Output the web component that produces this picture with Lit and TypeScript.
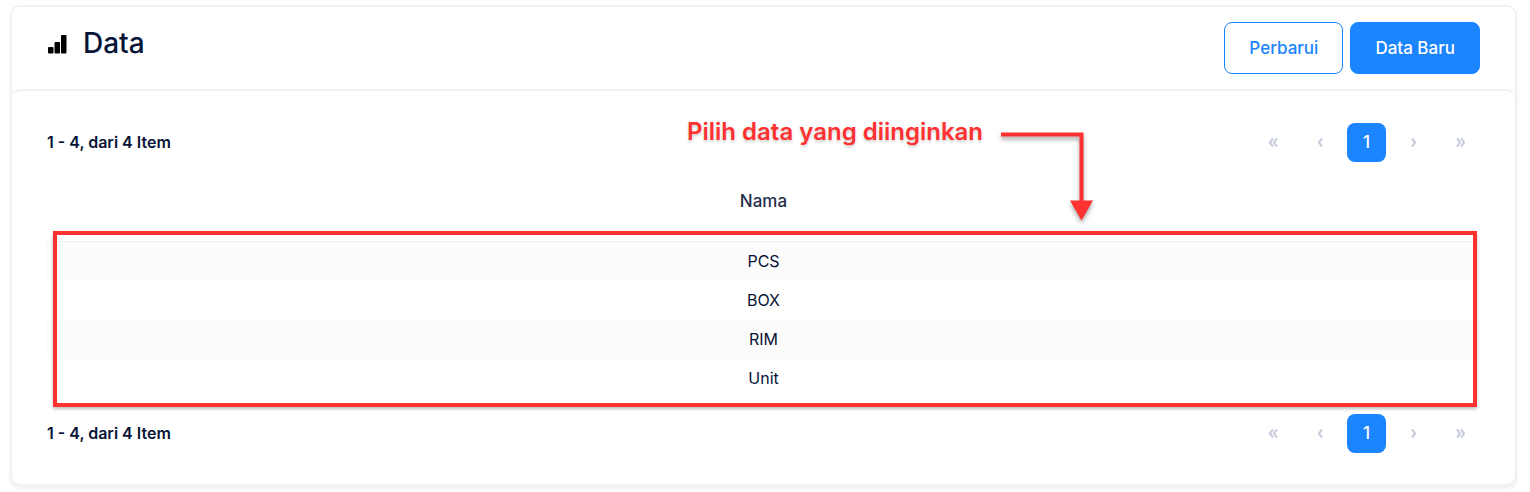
import { LitElement, html, css } from "lit";
import { customElement, property } from "lit/decorators.js";

@customElement("page-nav")
class PageNav extends LitElement {
  @property() summary = "";

  static styles = css`
    :host {
      display: flex;
      align-items: center;
      justify-content: space-between;
    }
    .summary {
      margin: 0;
      padding-bottom: 1px;
      font-size: 16px;
      line-height: 20px;
      font-weight: 600;
    }
    .pages {
      display: flex;
      gap: 8px;
    }
    button {
      display: flex;
      align-items: center;
      justify-content: center;
      width: 39px;
      height: 39px;
      padding: 0 0 2px;
      border: 0;
      border-radius: 8px;
      background: transparent;
      color: #c3c9da;
      font: 500 17px/24px Inter, sans-serif;
    }
    .current {
      background: #1b84ff;
      color: #fff;
    }
    svg {
      width: 10px;
      height: 10px;
      fill: none;
      stroke: currentColor;
      stroke-width: 2;
    }
  `;

  private icon(d: string) {
    return html`<svg viewBox="0 0 10 10" aria-hidden="true"><path d=${d}></path></svg>`;
  }

  render() {
    return html`
      <p class="summary">${this.summary}</p>
      <nav class="pages" aria-label="Halaman">
        <button aria-label="Pertama">${this.icon("M5 1.4 2 5.5 5 9.6M9 1.4 6 5.5 9 9.6")}</button>
        <button aria-label="Sebelumnya">${this.icon("M7 1.4 4 5.5 7 9.6")}</button>
        <button class="current" aria-current="page">1</button>
        <button aria-label="Berikutnya">${this.icon("M3 1.4 6 5.5 3 9.6")}</button>
        <button aria-label="Terakhir">${this.icon("M1 1.4 4 5.5 1 9.6M5 1.4 8 5.5 5 9.6")}</button>
      </nav>
    `;
  }
}

@customElement("app-root")
class AppRoot extends LitElement {
  static styles = css`
    :host {
      display: block;
      padding: 5px 13px 6px 10px;
      font-family: Inter, sans-serif;
      color: #071437;
      background: #fff;
    }
    * {
      box-sizing: border-box;
    }
    .card {
      border: 2px solid #f1f1f2;
      border-radius: 10px;
      background: #fafafa;
      box-shadow: 0 3px 4px rgba(0, 0, 0, 0.06);
    }
    .head {
      display: flex;
      justify-content: space-between;
      align-items: flex-start;
      padding: 15px 35px;
      border-radius: 8px 8px 0 0;
      background: #fff;
    }
    .title {
      display: flex;
      align-items: center;
      gap: 16px;
      margin: 0;
      font-size: 28px;
      line-height: 43px;
      font-weight: 500;
    }
    .bars {
      width: 20px;
      height: 20px;
      fill: #000;
    }
    .actions {
      display: flex;
      gap: 7px;
    }
    .btn {
      height: 52px;
      padding: 0 24px;
      border: 1px solid #1b84ff;
      border-radius: 8px;
      background: #fff;
      color: #1b84ff;
      font: 500 17px/24px Inter, sans-serif;
    }
    .primary {
      background: #1b84ff;
      color: #fff;
    }
    .body {
      padding: 32px 35px 31px;
      border-top: 2px solid #f1f1f2;
      border-radius: 10px;
      background: #fff;
    }
    .grid {
      position: relative;
      margin-bottom: 16px;
    }
    table {
      width: 100%;
      border-collapse: separate;
      border-spacing: 0;
      text-align: center;
    }
    th {
      height: 80px;
      padding: 0 0 2px;
      border-bottom: 1px solid #f1f1f2;
      color: #252f4a;
      font-size: 17px;
      line-height: 24px;
      font-weight: 500;
    }
    td {
      height: 39px;
      padding: 0 0 2px;
      font-size: 16px;
      line-height: 24px;
    }
    tbody tr:nth-child(odd) {
      background: #fbfbfb;
    }
    .frame {
      position: absolute;
      inset: 69px 3px -9px 6px;
      border: 4px solid #ff3131;
      box-shadow: 0 2px 3px rgba(0, 0, 0, 0.25);
      pointer-events: none;
    }
    .hint {
      position: absolute;
      top: -46px;
      left: 640px;
      display: flex;
      gap: 18px;
      color: #ff3131;
      font-size: 24px;
      line-height: 32px;
      font-weight: 600;
      white-space: nowrap;
      pointer-events: none;
    }
    .hint span {
      text-shadow: 0 2px 3px rgba(0, 0, 0, 0.2);
    }
    .arrow {
      width: 100px;
      height: 110px;
      filter: drop-shadow(0 3px 2px rgba(0, 0, 0, 0.35));
    }
  `;

  private rows = ["PCS", "BOX", "RIM", "Unit"];

  render() {
    const summary = `1 - ${this.rows.length}, dari ${this.rows.length} Item`;
    return html`
      <main class="card">
        <header class="head">
          <h1 class="title">
            <svg class="bars" viewBox="0 0 20 20" aria-hidden="true">
              <rect x="1" y="13" width="5.5" height="6.5" rx="1"></rect>
              <rect x="7.5" y="8" width="5.5" height="11.5" rx="1"></rect>
              <rect x="14" y="1" width="5.5" height="18.5" rx="1"></rect>
            </svg>
            Data
          </h1>
          <div class="actions">
            <button class="btn">Perbarui</button>
            <button class="btn primary">Data Baru</button>
          </div>
        </header>
        <section class="body">
          <page-nav .summary=${summary}></page-nav>
          <div class="grid">
            <table>
              <thead>
                <tr><th scope="col">Nama</th></tr>
              </thead>
              <tbody>
                ${this.rows.map((name) => html`<tr><td>${name}</td></tr>`)}
              </tbody>
            </table>
            <div class="frame"></div>
            <div class="hint">
              <span>Pilih data yang diinginkan</span>
              <svg class="arrow" viewBox="0 0 100 110" aria-hidden="true">
                <path d="M0 18.5H80.5V87" fill="none" stroke="#ff3131" stroke-width="4"></path>
                <path d="M69 84.5H92L80.5 104.5Z" fill="#ff3131"></path>
              </svg>
            </div>
          </div>
          <page-nav .summary=${summary}></page-nav>
        </section>
      </main>
    `;
  }
}
